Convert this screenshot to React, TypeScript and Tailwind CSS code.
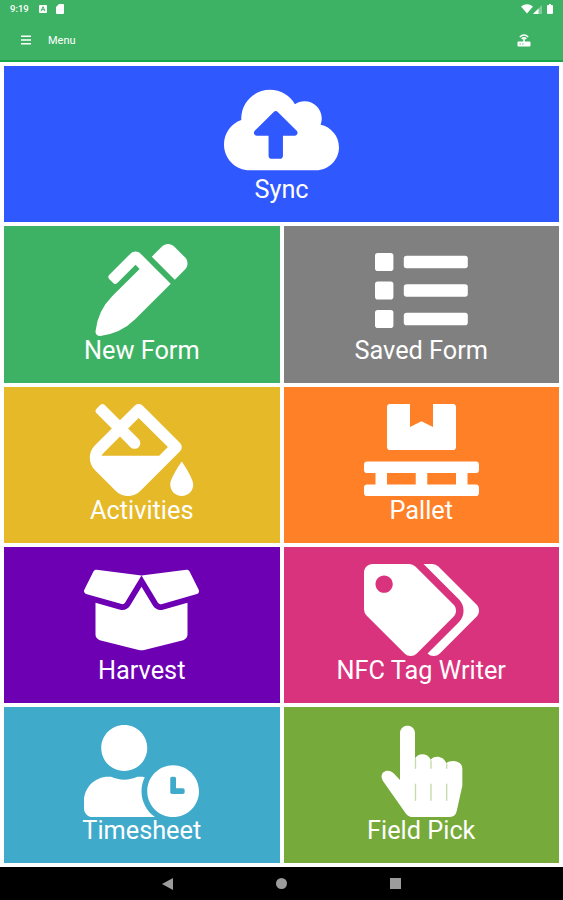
import type { ReactNode } from "react";
import {
  FaBoxOpen,
  FaCloudUploadAlt,
  FaFillDrip,
  FaPallet,
  FaPenAlt,
  FaTags,
  FaUserClock,
} from "react-icons/fa";

const iconClass = "h-[92px] w-[115px] shrink-0";

const ListIcon = () => (
  <svg viewBox="0 0 115 92" className={iconClass} fill="currentColor">
    {[9, 37.5, 66].map((y) => (
      <g key={y}>
        <rect x="11" y={y} width="18.4" height="18" rx="2.8" />
        <rect x="39.8" y={y + 2.7} width="64" height="12.6" rx="2.8" />
      </g>
    ))}
  </svg>
);

const HandIcon = () => (
  <svg viewBox="71 57 345 276" className={iconClass} fill="currentColor">
    <path d="M179 82C179 52 224 52 224 82V158C233 139 263 141 271 161C281 147 310 149 318 172C329 160 366 162 366 188V239L349 316Q345 333 329 333H218Q205 333 197 323L130 228C111 203 139 183 160 202L179 222Z" />
    <path
      d="M225.500 158V188M272 163V188M319 173V188M225.500 233V284M272 233V284M319 233V284"
      fill="none"
      stroke="#c3dba9"
      strokeWidth="4"
    />
  </svg>
);

type TileProps = {
  label: string;
  color: string;
  icon: ReactNode;
};

function Tile({ label, color, icon }: TileProps) {
  return (
    <button
      type="button"
      className={`flex min-h-0 flex-col items-center pt-[17.7px] text-white ${color}`}
    >
      {icon}
      <span className="-mt-[0.5px] whitespace-nowrap text-[25.300px] leading-[30px]">{label}</span>
    </button>
  );
}

const tiles: TileProps[] = [
  { label: "Sync", color: "col-span-2 bg-[#3058ff]", icon: <FaCloudUploadAlt className={iconClass} /> },
  { label: "New Form", color: "bg-[#3eb264]", icon: <FaPenAlt className={iconClass} /> },
  { label: "Saved Form", color: "bg-[#808080]", icon: <ListIcon /> },
  { label: "Activities", color: "bg-[#e6b929]", icon: <FaFillDrip className={iconClass} /> },
  { label: "Pallet", color: "bg-[#ff8027]", icon: <FaPallet className={iconClass} /> },
  { label: "Harvest", color: "bg-[#6d00b3]", icon: <FaBoxOpen className={iconClass} /> },
  { label: "NFC Tag Writer", color: "bg-[#da337e]", icon: <FaTags className={iconClass} /> },
  { label: "Timesheet", color: "bg-[#40aacb]", icon: <FaUserClock className={iconClass} /> },
  { label: "Field Pick", color: "bg-[#76aa3a]", icon: <HandIcon /> },
];

function StatusBar() {
  return (
    <div className="flex h-[18px] items-center justify-between pl-[10px] pr-[10px]">
      <div className="flex items-center">
        <span className="w-[29px] text-[9.500px] font-medium leading-none">9:19</span>
        <svg viewBox="0 0 8 8" className="h-2 w-2">
          <rect width="8" height="8" rx="1" fill="currentColor" />
          <path d="M2 6.200L4 1.700L6 6.200M2.800 4.700H5.200" fill="none" stroke="#3eb264" />
        </svg>
        <svg viewBox="0 0 8 10" className="ml-[9px] h-[10px] w-2" fill="currentColor">
          <path d="M3 0H7Q8 0 8 1V9Q8 10 7 10H1Q0 10 0 9V3Z" />
        </svg>
      </div>
      <div className="flex items-center">
        <svg viewBox="0 0 12 10" className="h-[10px] w-3" fill="currentColor">
          <path d="M0 2.500Q6-2 12 2.500L6 9.500Z" />
        </svg>
        <svg viewBox="0 0 9 9" className="h-[9px] w-[9px]" fill="currentColor">
          <path d="M9 0V9H0Z" opacity=".35" />
          <path d="M5.500 3.500V9H0Z" />
        </svg>
        <svg viewBox="0 0 6 10" className="ml-[5px] h-[10px] w-[6px]" fill="currentColor">
          <path d="M2 0H4V1H5Q6 1 6 2V9Q6 10 5 10H1Q0 10 0 9V2Q0 1 1 1H2Z" />
        </svg>
      </div>
    </div>
  );
}

function Header() {
  return (
    <header className="h-[62px] shrink-0 border-b-2 border-[#17a74a] bg-[#3eb264] text-white">
      <StatusBar />
      <div className="flex h-[44px] items-center pl-[21px] pr-[32px]">
        <svg viewBox="0 0 10 10" className="h-[10px] w-[10px]" stroke="currentColor" strokeWidth="1.5">
          <path d="M0 1.300H10M0 5H10M0 8.700H10" />
        </svg>
        <span className="ml-[17px] text-[11px] leading-none">Menu</span>
        <svg viewBox="0 0 14 13" className="ml-auto h-[13px] w-[14px]">
          <path d="M2.800 3Q7-1 11.200 3M4.700 4.900Q7 2.700 9.300 4.900M7 5V9" fill="none" stroke="currentColor" strokeWidth="1.6" />
          <rect x=".5" y="7.500" width="13" height="5" rx="1" fill="currentColor" />
          <path d="M2.500 10H4M5 10H6.500" stroke="#3eb264" strokeWidth=".8" />
        </svg>
      </div>
    </header>
  );
}

function NavBar() {
  return (
    <nav className="flex h-[33px] shrink-0 items-center justify-between bg-black pl-[162px] pr-[162px] text-[#9c9c9c]">
      <svg viewBox="0 0 11 12" className="h-3 w-[11px]" fill="currentColor">
        <path d="M11 0V12L0 6Z" />
      </svg>
      <span className="h-[11px] w-[11px] rounded-full bg-current" />
      <span className="h-[11px] w-[11px] bg-current" />
    </nav>
  );
}

export default function App() {
  return (
    <div className="flex h-screen w-full flex-col overflow-hidden bg-white font-['Roboto',sans-serif]">
      <Header />
      <main className="grid min-h-0 flex-1 grid-cols-2 grid-rows-5 gap-1 px-1 pb-[3.800px] pt-[4.200px]">
        {tiles.map((tile) => (
          <Tile key={tile.label} {...tile} />
        ))}
      </main>
      <NavBar />
    </div>
  );
}
